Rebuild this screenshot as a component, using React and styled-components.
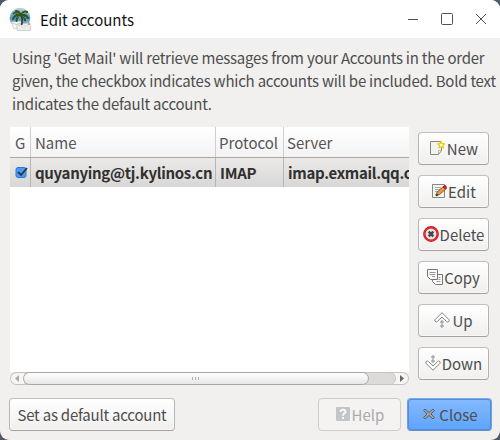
import React from 'react';
import styled, { createGlobalStyle, css } from 'styled-components';

const GlobalStyle = createGlobalStyle`
  *, *::before, *::after { box-sizing: border-box; }
  body {
    margin: 0;
    background: #4e5a68;
    font-family: "Noto Sans CJK SC", "Noto Sans", sans-serif;
    font-size: 15px;
    letter-spacing: -0.22px;
    line-height: 23px;
    color: #4d4d4d;
    overflow: hidden;
  }
`;

const Dialog = styled.main`
  width: 500px;
  height: 440px;
  display: flex;
  flex-direction: column;
  background: #f1f0ee;
  border-radius: 9px;
  overflow: hidden;
`;

const TitleBar = styled.header`
  height: 38px;
  flex: none;
  display: flex;
  align-items: center;
  background: #fff;
  padding: 0 7px 0 9px;
`;

const Title = styled.h1`
  margin: 0 auto 0 8px;
  font-size: 15px;
  letter-spacing: 0;
  font-weight: 400;
  color: #141414;
`;

const WindowControls = styled.div`
  display: flex;
  gap: 10px;
`;

const ControlButton = styled.button`
  width: 24px;
  height: 24px;
  padding: 0;
  border: 0;
  background: none;
  display: grid;
  place-items: center;
`;

const Description = styled.p`
  margin: 8px 0 0 12px;
  height: 69px;
  white-space: nowrap;
`;

const Content = styled.section`
  display: flex;
  gap: 9px;
  margin: 12px 0 0 10px;
  height: 258px;
`;

const TablePane = styled.div`
  width: 399px;
  display: flex;
  flex-direction: column;
  background: #fff;
  overflow: hidden;
`;

const Row = styled.div`
  display: grid;
  grid-template-columns: 21px 185px 68px 125px;
  flex: none;
  height: ${(p) => (p.$header ? 31 : 29)}px;
  white-space: nowrap;
  ${(p) => p.$header
    ? css`
        background: linear-gradient(#fff, #f4f3f3);
        border-bottom: 1px solid #aaa7a4;
        color: #555;
        letter-spacing: 0;
      `
    : css`
        background: linear-gradient(#ebeae9, #d9d7d5);
        color: #303030;
        font-weight: 700;
        letter-spacing: -0.3px;
      `}
`;

const Cell = styled.div`
  padding: ${(p) => p.$top || 3}px 0 0 ${(p) => p.$left || 4}px;
  border-right: ${(p) => (p.$last ? 0 : 1)}px solid ${(p) => (p.$header ? '#d0cecc' : '#b8b6b4')};
  overflow: hidden;
`;

const ScrollBar = styled.div`
  height: 13px;
  margin-top: auto;
  flex: none;
  display: flex;
  background: #f1f0ee;
`;

const Stepper = styled.div`
  width: 14px;
  border: 1px solid #c4c1be;
  background: #f6f5f4;
  display: grid;
  place-items: center;
  ${(p) => p.$end
    ? css`border-radius: 0 7px 7px 0; border-left: 0;`
    : css`border-radius: 7px 0 0 7px; border-right: 0;`}
`;

const Trough = styled.div`
  flex: 1;
  border: 1px solid #c8c5c2;
  border-left: 0;
  border-right: 0;
  background: #f6f5f4;
`;

const TroughFill = styled.div`
  width: 372px;
  height: 13px;
  margin-top: -1px;
  border: 1px solid #c8c5c2;
  border-left: 0;
  border-radius: 0 7px 7px 0;
  background: #dddbd9;
`;

const Thumb = styled.div`
  width: 346px;
  height: 13px;
  margin: -1px 0 0 -1px;
  border: 1px solid #a9a6a3;
  border-radius: 7px;
  background: linear-gradient(#fff, #e9e7e5);
  display: flex;
  gap: 2px;
  justify-content: center;
  align-items: center;
`;

const Grip = styled.i`
  width: 1px;
  height: 3px;
  background: #b4b1ae;
`;

const ActionColumn = styled.nav`
  display: flex;
  flex-direction: column;
  gap: 10px;
  padding-top: 5px;
`;

const palettes = {
  normal: css`
    color: #4d4d4d;
    background: linear-gradient(#fff, #f0efee);
    border-color: #c2bfbc #b6b3b0 #a4a19e;
    box-shadow: inset 0 0 0 1px #ffffff80;
  `,
  disabled: css`
    color: #aaa;
    background: #f4f3f2;
    border-color: #cfcdcb;
  `,
  primary: css`
    color: #4d4d4d;
    background: linear-gradient(#84b9ff, #5ea5fb);
    border-color: #79aceb #709fd9 #668ec3;
    box-shadow: inset 0 0 0 1px #4f8fdc;
  `,
};

const Button = styled.button`
  width: ${(p) => p.$width || 71}px;
  height: 33px;
  flex: none;
  display: flex;
  align-items: center;
  justify-content: center;
  gap: ${(p) => p.$gap || 1}px;
  padding: 0;
  border: 1px solid;
  border-radius: 4px;
  font: inherit;
  letter-spacing: ${(p) => (p.$width === 166 ? 'inherit' : 0)};
  white-space: nowrap;
  ${(p) => palettes[p.$tone || 'normal']}
`;

const Icon = styled.svg`
  width: 16px;
  height: 16px;
  flex: none;
  margin-top: -2px;
`;

const Footer = styled.footer`
  display: flex;
  gap: 6px;
  margin: 13px 8px 0 9px;
`;

const Spacer = styled.span`
  flex: 1;
`;

const AppLogo = styled.svg`
  width: 23px;
  height: 25px;
  flex: none;
`;

const Logo = () => (
  <AppLogo viewBox="0 0 23 25">
    <defs>
      <linearGradient id="sky" x2="0" y2="1">
        <stop stopColor="#c2d3e0" />
        <stop offset=".5" stopColor="#4b96c6" />
        <stop offset="1" stopColor="#a9cbe0" />
      </linearGradient>
    </defs>
    <circle cx="11" cy="11" r="10.3" fill="url(#sky)" />
    <path d="M2 15l10-1 4 6-11 2z" fill="#f4f4f3" stroke="#bbb" strokeWidth=".6" />
    <path d="M3 16l6 2 3-4" fill="none" stroke="#bbb" strokeWidth=".7" />
    <path d="M8 17l13-1 .5 7.500H8z" fill="#efedec" stroke="#bbb" strokeWidth=".6" />
    <path d="M8.500 17.500l6 3 6-4" fill="none" stroke="#ccc" strokeWidth=".6" />
    <path d="M11.500 7q3 5 1 11" fill="none" stroke="#3b4228" strokeWidth="1.800" />
    <g fill="none" stroke="#31531f" strokeWidth="2" strokeLinecap="round">
      <path d="M11.500 7.500Q8 4 4.500 6.500M11 7.500Q6 7 4 12M11 8Q8 9 7.500 14M12 7.500Q15 3.500 18 5M12 8q5-1 7 3M12 8.500q4 1 4 5M11 7Q10 4 7 4" />
    </g>
    <path d="M5 7q3-2 5 0M13 7q3-2 5 0M8 11l2-2M14 9l2 2" fill="none" stroke="#76a040" strokeWidth=".7" />
    <path d="M19 16h2v2h-2z" fill="#e69582" />
  </AppLogo>
);

const NewIcon = () => (
  <Icon viewBox="0 0 16 16">
    <path d="M1.500 1.5h11v9l-3 4h-8z" fill="#f2f2ef" stroke="#858782" />
    <path d="M9.500 14v-3.500h3z" fill="#fff" stroke="#9a9b96" strokeWidth=".7" />
    <path d="M12.200 1.500l1 2 2.300.3-1.600 1.700.4 2.400-2.100-1.100-2.100 1.100.4-2.400-1.600-1.700 2.300-.3z" fill="#fffde0" stroke="#e9d01f" strokeWidth="1.500" strokeLinejoin="round" />
  </Icon>
);

const EditIcon = () => (
  <Icon viewBox="0 0 16 16">
    <path d="M1.5 1.5h12v13h-12z" fill="#f5f5f2" stroke="#858782" />
    <path d="M4 4.5h6M4 6.5h5M4 8.5h3M4 11.5h1" stroke="#aaa" />
    <path d="M5 13l1-4 7-6 2.5 2.5-7 6z" fill="#e59b46" stroke="#824519" strokeWidth=".8" />
    <path d="M12 4l1.4-1.5q2-.3 2.1 2L14.2 6z" fill="#d6222b" stroke="#951321" strokeWidth=".7" />
    <path d="M5 13l.8-2.6 1.7 1.7z" fill="#222" />
  </Icon>
);

const DeleteIcon = () => (
  <Icon viewBox="0 0 16 16">
    <circle cx="8" cy="8" r="6.700" fill="#e4e4e4" stroke="#d7141e" strokeWidth="2.400" />
    <circle cx="8" cy="8" r="6.700" fill="none" stroke="#ef5553" strokeWidth=".5" />
    <path d="M5.7 5.7l4.6 4.6m0-4.6l-4.6 4.6" stroke="#484848" strokeWidth="2.5" />
  </Icon>
);

const CopyIcon = () => (
  <Icon viewBox="0 0 16 16">
    <path d="M5.500 5.500h10v10h-7l-3-3z" fill="#fafafa" stroke="#777" />
    <path d="M11.500 8.500h2M11.500 10.500h2M9.500 12.500h4" stroke="#999" />
    <path d="M.5.500h10v10h-7l-3-3z" fill="#fafafa" stroke="#777" />
    <path d="M2.500 3.500h6M2.500 5.500h6M5 7.500h3" stroke="#999" />
  </Icon>
);

const ArrowIcon = ({ down }) => (
  <Icon viewBox="0 0 16 16">
    <g transform={down ? 'translate(0 16) scale(1 -1)' : undefined} fill="#fff" stroke="#777" strokeWidth=".9" strokeLinejoin="round">
      <path d="M8 .7L.9 7.8q-.3 1.2.7 2 1 .5 1.8-.3L8 5l4.6 4.5q.8.8 1.8.3 1-.8.7-2z" />
      <circle cx="8" cy="10" r="1.2" />
      <circle cx="8" cy="14" r="1.2" />
    </g>
  </Icon>
);

const HelpIcon = () => (
  <Icon viewBox="0 0 16 16">
    <rect x="1" y="1" width="14" height="14" rx="1" fill="#c4c5c6" />
    <path d="M5.5 5.8q.2-2.1 2.5-2.1t2.5 2Q10.500 7 9 7.700 8 8.200 8 9.700" fill="none" stroke="#fafafa" strokeWidth="2" />
    <path d="M7 11h2v2H7z" fill="#fafafa" />
  </Icon>
);

const CloseIcon = () => (
  <Icon viewBox="0 0 16 16">
    <path d="M4 3l4 3.500L12 3l1.500 1.500L10 8l3.500 3.500L12 13 8 9.500 4 13l-1.500-1.500L6 8 2.500 4.500z" fill="#a1a3a2" stroke="#58616b" strokeLinejoin="round" />
  </Icon>
);

const CheckIcon = styled.svg`
  width: 14px;
  height: 14px;
  display: block;
`;

const actions = [
  ['New', NewIcon, 2],
  ['Edit', EditIcon, 1],
  ['Delete', DeleteIcon, 1],
  ['Copy', CopyIcon, 1],
  ['Up', () => <ArrowIcon />, 2],
  ['Down', () => <ArrowIcon down />, 1],
];

export default function App() {
  return (
    <>
      <GlobalStyle />
      <Dialog>
        <TitleBar>
          <Logo />
          <Title>Edit accounts</Title>
          <WindowControls>
            <ControlButton aria-label="Minimize">
              <svg width="12" height="12"><path d="M1 6.500h10" stroke="#505050" /></svg>
            </ControlButton>
            <ControlButton aria-label="Maximize">
              <svg width="12" height="12"><rect x=".5" y=".5" width="11" height="11" rx="1" fill="none" stroke="#505050" /></svg>
            </ControlButton>
            <ControlButton aria-label="Close window">
              <svg width="12" height="12"><path d="M1 1l10 10M11 1L1 11" stroke="#505050" /></svg>
            </ControlButton>
          </WindowControls>
        </TitleBar>
        <Description>
          Using 'Get Mail' will retrieve messages from your Accounts in the order<br />
          given, the checkbox indicates which accounts will be included. Bold text<br />
          indicates the default account.
        </Description>
        <Content>
          <TablePane>
            <Row $header>
              <Cell $header $top={4} $left={5}>G</Cell>
              <Cell $header $top={4}>Name</Cell>
              <Cell $header $top={4} $left={3}>Protocol</Cell>
              <Cell $last $top={4} $left={3}>Server</Cell>
            </Row>
            <Row>
              <Cell $top={8} $left={4.5}>
                <CheckIcon viewBox="0 0 14 14">
                  <rect x="1" y="1.500" width="10" height="10" rx="2" fill="#479aff" stroke="#2f79cc" />
                  <path d="M3 6l3 3 6-7" fill="none" stroke="#303438" strokeWidth="1.800" />
                </CheckIcon>
              </Cell>
              <Cell $top={3}>quyanying@tj.kylinos.cn</Cell>
              <Cell $top={3}>IMAP</Cell>
              <Cell $last $top={3}>imap.exmail.qq.com</Cell>
            </Row>
            <ScrollBar>
              <Stepper><svg width="4" height="7"><path d="M4 0v7L0 3.500z" fill="#aaa" /></svg></Stepper>
              <Trough><TroughFill><Thumb><Grip /><Grip /><Grip /></Thumb></TroughFill></Trough>
              <Stepper $end><svg width="4" height="7"><path d="M0 0v7l4-3.500z" fill="#666" /></svg></Stepper>
            </ScrollBar>
          </TablePane>
          <ActionColumn>
            {actions.map(([label, Glyph, gap]) => (
              <Button key={label} $gap={gap}><Glyph />{label}</Button>
            ))}
          </ActionColumn>
        </Content>
        <Footer>
          <Button $width={166}>Set as default account</Button>
          <Spacer />
          <Button $width={83} $tone="disabled" disabled><HelpIcon />Help</Button>
          <Button $width={85} $tone="primary" $gap={2}><CloseIcon />Close</Button>
        </Footer>
      </Dialog>
    </>
  );
}
